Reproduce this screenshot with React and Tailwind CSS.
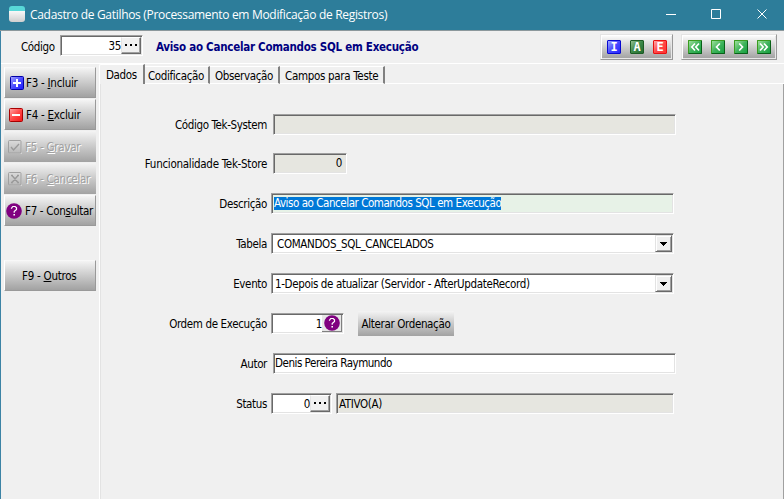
import React from "react";

const sunken =
  "border border-t-[#a0a0a0] border-l-[#a0a0a0] border-b-white border-r-white shadow-[inset_1px_1px_0_#696969,inset_-1px_-1px_0_#e3e3e3]";
const metal = "bg-linear-to-b from-[#f4f4f4] to-[#a2a2a2]";

function Field({ className = "", children }) {
  return (
    <div className={`flex h-[21px] shrink-0 items-center whitespace-pre pb-px ${sunken} ${className}`}>
      {children}
    </div>
  );
}

function Row({ label, labelClass = "", className = "", children }) {
  return (
    <div className={`flex h-[21px] items-center ${className}`}>
      <div className="flex w-[167px] shrink-0 justify-end pt-px whitespace-nowrap">
        <span className={labelClass}>{label}</span>
      </div>
      {children}
    </div>
  );
}

function Dots() {
  return (
    <div className="mt-px flex h-[17px] w-[20px] shrink-0 items-center justify-center gap-[3px] border border-t-white border-l-[#e3e3e3] border-b-[#696969] border-r-[#696969] bg-[#f0f0f0] pb-px shadow-[inset_-1px_-1px_0_#a0a0a0]">
      <i className="size-[2px] bg-black" />
      <i className="size-[2px] bg-black" />
      <i className="size-[2px] bg-black" />
    </div>
  );
}

function DropButton() {
  return (
    <div className="mt-px mr-px ml-auto flex h-[17px] w-[17px] items-center justify-center border border-t-[#e3e3e3] border-l-[#e3e3e3] border-b-[#696969] border-r-[#696969] bg-[#f0f0f0] shadow-[inset_1px_1px_0_#fff,inset_-1px_-1px_0_#a0a0a0]">
      <svg width="7" height="4" shapeRendering="crispEdges">
        <path d="M0 0h7v1H0zM1 1h5v1H1zM2 2h3v1H2zM3 3h1v1H3z" />
      </svg>
    </div>
  );
}

function Question() {
  return (
    <svg width="16" height="16" className="shrink-0">
      <circle cx="8" cy="8" r="7.8" fill="#800080" />
      <path d="M5.5 5.8V5.2L6.8 3.5h2.4l1.3 1.3v1.7L8.2 8.5v1.3" fill="none" stroke="#fff" strokeWidth="1.2" />
      <path d="M7.4 11h1.6v1.6H7.4z" fill="#fff" />
    </svg>
  );
}

function SideButton({ icon, pre, hot, post, disabled, className = "", textClass = "" }) {
  return (
    <div
      className={`flex h-[31px] w-[92px] items-center whitespace-pre tracking-[-0.26px] ${metal} ${
        disabled
          ? "text-[#a0a0a0] [text-shadow:1px_1px_0_#fff]"
          : "border-t border-l border-r border-b border-t-[#f8f8f8] border-l-white border-r-[#999] border-b-[#999]"
      } ${className}`}
    >
      {icon}
      <span className={`pt-px ${textClass}`}>
        {pre}
        <span className="underline underline-offset-1">{hot}</span>
        {post}
      </span>
    </div>
  );
}

function Square({ kind }) {
  if (kind === "plus" || kind === "minus") {
    const plus = kind === "plus";
    return (
      <svg width="14" height="14" className="shrink-0">
        <defs>
          <linearGradient id={kind} x1="0" y1="0" x2="1" y2="1">
            <stop offset="0" stopColor={plus ? "#a8a8ff" : "#ffa8a8"} />
            <stop offset=".5" stopColor={plus ? "#4c4cff" : "#ff4848"} />
            <stop offset="1" stopColor={plus ? "#1818ff" : "#f41414"} />
          </linearGradient>
        </defs>
        <rect x=".5" y=".5" width="13" height="13" rx="1" fill={`url(#${kind})`} stroke={plus ? "#0000a8" : "#a80000"} />
        <path d={plus ? "M3 6h8v2H3zM6 3h2v8H6z" : "M3 6h8v2H3z"} fill="#fff" />
      </svg>
    );
  }
  return (
    <svg width="14" height="14" className="shrink-0" fill="none">
      <path d="M1.5 14H14V1.5" stroke="#ddd" />
      <rect x=".5" y=".5" width="12.5" height="12.5" rx="1" stroke="#a0a0a0" />
      <path d={kind === "check" ? "M3 7l2.5 3L11 4" : "M4 3.5l6 7M10 3.5l-6 7M3 3.5h2M9 3.5h2M3 10.5h2M9 10.5h2"} stroke="#999" strokeWidth="1.4" />
    </svg>
  );
}

function Letter({ children, className }) {
  return (
    <div className={`flex size-[14px] items-center justify-center rounded-[1px] border font-['DejaVu_Sans_Mono',monospace] text-[12px] leading-none font-bold tracking-normal text-white ${className}`}>
      {children}
    </div>
  );
}

function Nav({ d }) {
  return (
    <div className="size-[14px] rounded-[1px] border border-t-[#3a9c20] border-l-[#3a9c20] border-r-[#086018] border-b-[#086018] bg-linear-to-br from-[#9ce09c] via-[#3eb45c] to-[#12a040]">
      <svg width="12" height="12" fill="none" stroke="#fff">
        <path d={d} strokeWidth="1.7" />
      </svg>
    </div>
  );
}

const groupBox =
  "flex h-[26px] items-center gap-[9px] pl-[6px] border border-t-[#e4e4e4] border-l-[#e4e4e4] border-r-[#999] border-b-[#999] bg-linear-to-b from-white to-[#a0a0a0] shadow-[inset_1px_1px_0_#fff,inset_-1px_-1px_0_#e8e8e8]";

export default function App() {
  return (
    <div className="flex h-[499px] w-[784px] flex-col overflow-hidden bg-[#f0f0f0] font-['DejaVu_Sans_Condensed','DejaVu_Sans',sans-serif] text-[11.5px] leading-[14px] tracking-[-0.36px] text-black">
      <header className="flex h-[31px] shrink-0 items-center border-b border-[#8c989c] bg-[#2d7d9a] pl-[9px] text-white">
        <div className="mt-[-2px] h-4 w-4 rounded-[3px] bg-linear-to-b from-[#58d8d8] from-30% via-[#f8f8f8] via-32% to-[#cfcfcf]" />
        <span className="ml-[5px] pb-[1px] font-['Open_Sans','Noto_Sans',sans-serif] text-[12px] tracking-[-0.31px] whitespace-nowrap">
          Cadastro de Gatilhos (Processamento em Modificação de Registros)
        </span>
        <svg width="104" height="12" className="mr-[16px] mb-[2px] ml-auto" fill="none" stroke="#fff">
          <path d="M2 6.5h10M47.5 1.5h9v9h-9zM93.5 1.5l9 9M102.5 1.5l-9 9" />
        </svg>
      </header>

      <div className="flex min-h-0 flex-1 flex-col border-l border-[#3c83a5]">
        <div className="flex h-[33px] shrink-0 border-b border-white">
          <span className="mt-[9px] ml-[20px] w-[39px]">Código</span>
          <Field className="mt-[4px] w-[83px] justify-end bg-white pr-px">
            <span className="pt-[2px]">35</span>
            <Dots />
          </Field>
          <b className="mt-[9px] ml-[13px] whitespace-nowrap text-[#000080] tracking-[-0.26px]">
            Aviso ao Cancelar Comandos SQL em Execução
          </b>
          <div className={`mt-[3px] ml-auto w-[73px] ${groupBox}`}>
            <Letter className="border-[#0808d0] bg-linear-to-br from-[#a4a4ff] via-[#4848ff] to-[#2424ff]">I</Letter>
            <Letter className="border-[#1c5c24] bg-linear-to-br from-[#90c090] via-[#3c8848] to-[#246c30]">A</Letter>
            <Letter className="border-[#e81010] bg-linear-to-br from-[#ffa8a8] via-[#ff4848] to-[#ff3030]">E</Letter>
          </div>
          <div className={`mt-[3px] mr-[7px] ml-[8px] w-[96px] ${groupBox}`}>
            <Nav d="M6 2.5L2.8 6L6 9.5M10 2.5L6.8 6L10 9.5" />
            <Nav d="M7.8 2.5L4.5 6L7.8 9.5" />
            <Nav d="M4.2 2.5L7.5 6L4.2 9.5" />
            <Nav d="M2 2.5L5.2 6L2 9.5M6 2.5L9.2 6L6 9.5" />
          </div>
        </div>

        <div className="flex min-h-0 flex-1">
          <aside className="flex w-[98px] shrink-0 flex-col gap-px pt-[3px] pl-[3px]">
            <SideButton icon={<Square kind="plus" />} pre="F3 - " hot="I" post="ncluir" className="pl-[5px]" textClass="ml-[2px]" />
            <SideButton icon={<Square kind="minus" />} pre="F4 - " hot="E" post="xcluir" className="pl-[4px]" textClass="ml-[3px]" />
            <SideButton disabled icon={<Square kind="check" />} pre="F5 - " hot="G" post="ravar" className="pl-[4px]" textClass="ml-[3px]" />
            <SideButton disabled icon={<Square kind="x" />} pre="F6 - " hot="C" post="ancelar" className="pl-[4px]" textClass="ml-[3px]" />
            <SideButton icon={<Question />} pre="F7 - Con" hot="s" post="ultar" className="pl-[1px]" textClass="ml-[3px] tracking-[-0.32px]" />
            <SideButton pre="F9 - " hot="O" post="utros" className="mt-[33px] pl-[17px]" />
          </aside>

          <main className="flex min-w-0 flex-1 flex-col">
            <nav className="flex h-[20px] shrink-0 items-end whitespace-nowrap">
              <div className="h-[20px] w-[46px] rounded-tl-[2px] border-t border-l border-white border-r-2 border-r-[#808080] pt-[3px] pl-[6px]">Dados</div>
              <div className="h-[18px] w-[65px] border-t border-b border-white border-r-2 border-r-[#808080] pt-[2px] pl-[3px]">Codificação</div>
              <div className="h-[18px] w-[70px] border-t border-b border-white border-r-2 border-r-[#808080] pt-[2px] pl-[5px]">Observação</div>
              <div className="h-[18px] w-[105px] border-t border-b border-white border-r-2 border-r-[#808080] pt-[2px] pl-[5px] tracking-[-0.31px]">Campos para Teste</div>
              <div className="h-px flex-1 bg-white" />
            </nav>
            <section className="flex flex-1 flex-col gap-[19px] border-l border-l-white border-r border-r-[#a0a0a0] pt-[30px] shadow-[inset_1px_0_0_#e3e3e3]">
              <Row label="Código Tek-System">
                <Field className="ml-[6px] w-[403px] bg-[#e6e6e0]" />
              </Row>
              <Row label="Funcionalidade Tek-Store" labelClass="tracking-[-0.28px]" className="-mt-px">
                <Field className="ml-[6px] w-[74px] justify-end bg-[#e6e6e0] pr-[4px]">0</Field>
              </Row>
              <Row label="Descrição">
                <Field className="ml-[4px] w-[403px] bg-[#e7f2e7] pl-[2px]">
                  <span className="h-[13px] bg-[#0078d7] leading-[13px] tracking-[-0.45px] text-white">Aviso ao Cancelar Comandos SQL em Execução</span>
                </Field>
              </Row>
              <Row label="Tabela">
                <Field className="ml-[4px] w-[403px] bg-white pl-[5px]">
                  <span className="pt-px tracking-[-0.33px]">COMANDOS_SQL_CANCELADOS</span>
                  <DropButton />
                </Field>
              </Row>
              <Row label="Evento">
                <Field className="ml-[4px] w-[403px] bg-white pl-[3px]">
                  <span className="pt-px">1-Depois de atualizar (Servidor - AfterUpdateRecord)</span>
                  <DropButton />
                </Field>
              </Row>
              <Row label="Ordem de Execução">
                <Field className="ml-[4px] w-[73px] justify-end bg-white pr-px">
                  <span className="pt-[2px]">1</span>
                  <div className="mt-px flex h-[17px] w-[20px] items-center justify-end border-b border-r border-[#808080] bg-[#e6e6e6] pr-px">
                    <Question />
                  </div>
                </Field>
                <div className={`ml-[14px] flex h-[25px] w-[96px] shrink-0 items-center justify-center pt-px whitespace-nowrap ${metal}`}>Alterar Ordenação</div>
              </Row>
              <Row label="Autor">
                <Field className="ml-[6px] w-[403px] bg-white pl-[1px] tracking-[-0.47px]">Denis Pereira Raymundo</Field>
              </Row>
              <Row label="Status">
                <Field className="ml-[4px] w-[61px] justify-end bg-white pr-px">
                  <span className="pt-[2px]">0</span>
                  <Dots />
                </Field>
                <Field className="ml-[4px] w-[338px] bg-[#e6e6e0] pt-px pl-[2px]">ATIVO(A)</Field>
              </Row>
            </section>
          </main>
        </div>
      </div>
    </div>
  );
}
